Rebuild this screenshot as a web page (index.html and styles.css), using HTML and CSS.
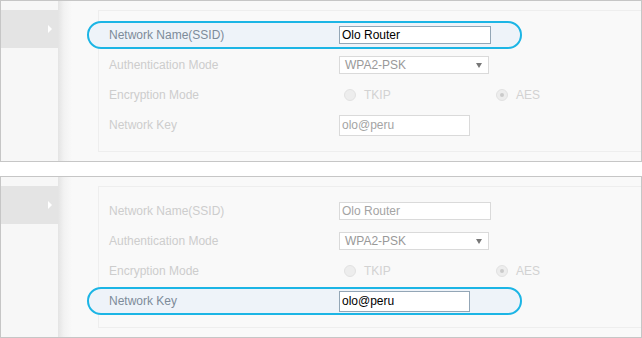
FILE: index.html
```html
<!DOCTYPE html>
<html lang="en">
<head>
  <meta charset="UTF-8">
  <title>Wireless Settings</title>
  <link rel="stylesheet" href="styles.css">
</head>
<body>
  <!-- step 1: network name -->
  <section class="panel">
    <aside class="sidebar">
      <div class="side-item"></div>
    </aside>
    <div class="content">
      <div class="form-box">
        <div class="row active">
          <span class="label">Network Name(SSID)</span>
          <input class="field" type="text" value="Olo Router">
        </div>
        <div class="row">
          <span class="label">Authentication Mode</span>
          <div class="select">WPA2-PSK<span class="caret"></span></div>
        </div>
        <div class="row">
          <span class="label">Encryption Mode</span>
          <div class="radios">
            <span class="radio-opt"><span class="radio"></span>TKIP</span>
            <span class="radio-opt"><span class="radio checked"></span>AES</span>
          </div>
        </div>
        <div class="row">
          <span class="label">Network Key</span>
          <input class="field key" type="text" value="olo@peru">
        </div>
      </div>
    </div>
  </section>

  <!-- step 2: network key -->
  <section class="panel">
    <aside class="sidebar">
      <div class="side-item"></div>
    </aside>
    <div class="content">
      <div class="form-box">
        <div class="row">
          <span class="label">Network Name(SSID)</span>
          <input class="field" type="text" value="Olo Router">
        </div>
        <div class="row">
          <span class="label">Authentication Mode</span>
          <div class="select">WPA2-PSK<span class="caret"></span></div>
        </div>
        <div class="row">
          <span class="label">Encryption Mode</span>
          <div class="radios">
            <span class="radio-opt"><span class="radio"></span>TKIP</span>
            <span class="radio-opt"><span class="radio checked"></span>AES</span>
          </div>
        </div>
        <div class="row active">
          <span class="label">Network Key</span>
          <input class="field key" type="text" value="olo@peru">
        </div>
      </div>
    </div>
  </section>
</body>
</html>
```

FILE: styles.css
```css
body {
  margin: 0;
  padding: 0;
  background-color: #fff;
  font-family: 'Liberation Sans', Arial, sans-serif;
  font-size: 12px;
}

.panel {
  display: flex;
  width: 642px;
  height: 162px;
  box-sizing: border-box;
  border: 1px solid #c6c6c6;
  background-color: #f9f9f9;
  overflow: hidden;
}

.panel + .panel {
  margin-top: 14px;
}

.sidebar {
  width: 57px;
  padding-top: 9px;
  box-sizing: border-box;
  background-color: #f7f7f7;
}

.side-item {
  position: relative;
  height: 38px;
  background-color: #e4e4e4;
}

.side-item::after {
  content: '';
  position: absolute;
  right: 6px;
  top: 15px;
  border-left: 4px solid #fff;
  border-top: 4px solid transparent;
  border-bottom: 4px solid transparent;
}

.content {
  flex: 1;
  padding: 9px 0 0 40px;
  background: linear-gradient(to right, #e4e4e4, #f2f2f2 6px, #f9f9f9 14px);
}

.form-box {
  height: 142px;
  box-sizing: border-box;
  padding-top: 10px;
  border: 1px solid #eeeeee;
  border-right: none;
}

.row {
  display: flex;
  align-items: center;
  width: 435px;
  height: 28px;
  margin: 0 0 2px -12px;
  padding-left: 20px;
  box-sizing: border-box;
  border: 2px solid transparent;
  border-radius: 14px;
}

.row.active {
  border-color: #1cb5e5;
  background-color: #eef3f9;
}

.label {
  width: 230px;
  flex-shrink: 0;
  color: #cdcdcd;
}

.row.active .label {
  color: #7d8b99;
}

.field {
  width: 152px;
  height: 18px;
  margin: 0;
  padding: 0 2px;
  box-sizing: border-box;
  border: 1px solid #dadada;
  background-color: #fff;
  font-family: 'Liberation Sans', Arial, sans-serif;
  font-size: 12px;
  color: #a4a4a4;
  outline: none;
}

.field.key {
  width: 131px;
  height: 21px;
}

.row.active .field {
  border-color: #93a6b6;
  color: #000;
}

.select {
  position: relative;
  width: 150px;
  height: 18px;
  line-height: 16px;
  padding-left: 5px;
  box-sizing: border-box;
  border: 1px solid #dadada;
  background-color: #fff;
  color: #999;
}

.caret {
  position: absolute;
  right: 6px;
  top: 6px;
  border-top: 5px solid #777;
  border-left: 3px solid transparent;
  border-right: 3px solid transparent;
}

.radios {
  display: flex;
  padding-left: 5px;
}

.radio-opt {
  display: flex;
  align-items: center;
  gap: 8px;
  width: 152px;
  color: #d2d2d2;
}

.radio {
  position: relative;
  width: 12px;
  height: 12px;
  box-sizing: border-box;
  border: 1px solid #e2e2e2;
  border-radius: 50%;
  background-color: #ededed;
}

.radio.checked::after {
  content: '';
  position: absolute;
  left: 3px;
  top: 3px;
  width: 4px;
  height: 4px;
  border-radius: 50%;
  background-color: #cacaca;
}
```
